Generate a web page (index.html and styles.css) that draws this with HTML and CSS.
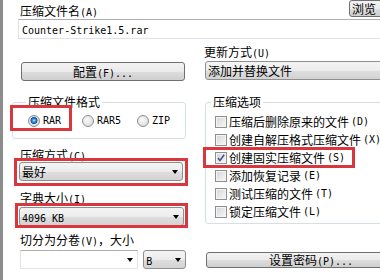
FILE: index.html
```html
<!DOCTYPE html>
<html lang="zh-CN">
<head>
    <meta charset="UTF-8">
    <title>压缩文件名和参数</title>
    <link rel="stylesheet" href="styles.css">
</head>
<body>

    <div class="dialog">
        <div class="name-row">
            <span class="label">压缩文件名<span class="en">(A)</span></span>
            <button class="btn btn-browse">浏览</button>
        </div>
        <div class="name-input"><span class="en">Counter-Strike1.5.rar</span></div>

        <div class="cols">
            <div class="col-left">
                <button class="btn btn-profile">配置<span class="en">(F)...</span></button>

                <div class="group group-format">
                    <div class="group-title">压缩文件格式</div>
                    <div class="radios">
                        <div class="radio"><span class="radio-dot on"></span><span class="en">RAR</span></div>
                        <div class="radio"><span class="radio-dot"></span><span class="en">RAR5</span></div>
                        <div class="radio"><span class="radio-dot"></span><span class="en">ZIP</span></div>
                    </div>
                </div>

                <div class="label lbl-method">压缩方式<span class="en">(C)</span></div>
                <div class="combo combo-method">最好</div>

                <div class="label lbl-dict">字典大小<span class="en">(I)</span></div>
                <div class="combo combo-dict"><span class="en">4096 KB</span></div>

                <div class="label lbl-split">切分为分卷<span class="en">(V)</span>，大小</div>
                <div class="split-row">
                    <div class="combo combo-edit"></div>
                    <div class="combo combo-unit"><span class="en">B</span></div>
                </div>
            </div>

            <div class="col-right">
                <div class="label lbl-update">更新方式<span class="en">(U)</span></div>
                <div class="combo combo-update">添加并替换文件</div>

                <div class="group group-options">
                    <div class="group-title">压缩选项</div>
                    <div class="checks">
                        <div class="check"><span class="box"></span>压缩后删除原来的文件<span class="en">(D)</span></div>
                        <div class="check"><span class="box"></span>创建自解压格式压缩文件<span class="en">(X)</span></div>
                        <div class="check"><span class="box"><svg width="10" height="10" viewBox="0 0 10 10"><path d="M2 5 L4 7.5 L8.2 1.8" fill="none" stroke="#41569a" stroke-width="1.6"/></svg></span>创建固实压缩文件<span class="en">(S)</span></div>
                        <div class="check"><span class="box"></span>添加恢复记录<span class="en">(E)</span></div>
                        <div class="check"><span class="box"></span>测试压缩的文件<span class="en">(T)</span></div>
                        <div class="check"><span class="box"></span>锁定压缩文件<span class="en">(L)</span></div>
                    </div>
                </div>

                <button class="btn btn-password">设置密码<span class="en">(P)...</span></button>
            </div>
        </div>

        <!-- red annotation frames -->
        <div class="mark mark-rar"></div>
        <div class="mark mark-method"></div>
        <div class="mark mark-dict"></div>
        <div class="mark mark-solid"></div>
    </div>

</body>
</html>
```

FILE: styles.css
```css
body {
    margin: 0;
    background: #fff;
    font-family: "Noto Sans CJK SC", sans-serif;
    font-size: 12px;
    color: #000;
}

.dialog {
    position: relative;
    width: 380px;
    height: 280px;
    box-sizing: border-box;
    border-left: 3px solid #8c8c8c;
    padding-left: 17px;
    overflow: hidden;
}

.en {
    font-family: "DejaVu Sans Mono", monospace;
    font-size: 10px;
}

.label {
    display: block;
    height: 12px;
    line-height: 12px;
    white-space: nowrap;
}

/* top row: file name */
.name-row {
    display: flex;
    justify-content: space-between;
    height: 19px;
}

.name-row .label {
    margin-top: 5px;
}

.btn {
    display: block;
    box-sizing: border-box;
    padding: 0;
    border: 1px solid #707070;
    border-radius: 3px;
    background: linear-gradient(#f2f2f2 0%, #ebebeb 50%, #dddddd 51%, #cfcfcf 100%);
    font: inherit;
    color: #000;
    white-space: nowrap;
}

.btn-browse {
    width: 40px;
    height: 17px;
    margin-right: -9px;
    padding-left: 2px;
    text-align: left;
    line-height: 15px;
}

.name-input {
    height: 20px;
    box-sizing: border-box;
    margin-left: -2px;
    margin-right: -30px;
    padding-left: 3px;
    border: 1px solid #e2e3ea;
    border-top-color: #abadb3;
    line-height: 18px;
    background: #fff;
}

.cols {
    display: grid;
    grid-template-columns: 166px 1fr;
    column-gap: 18px;
}

/* left column */
.btn-profile {
    margin-top: 23px;
    margin-left: 1px;
    width: 164px;
    height: 19px;
    line-height: 17px;
}

.group {
    box-sizing: border-box;
    border: 1px solid #d5dfe5;
    border-radius: 3px;
}

.group-title {
    width: max-content;
    margin-top: -7px;
    padding: 0 2px;
    background: #fff;
    line-height: 12px;
}

.group-format {
    margin-top: 21px;
    margin-left: -8px;
    width: 174px;
    height: 37px;
    padding-left: 15px;
}

.group-format .group-title {
    margin-left: -2px;
}

.radios {
    display: grid;
    grid-template-columns: 54px 55px auto;
    margin-top: 7px;
    height: 12px;
}

.radio {
    display: flex;
    align-items: center;
    gap: 3px;
    height: 12px;
    line-height: 12px;
}

.radio-dot {
    width: 12px;
    height: 12px;
    box-sizing: border-box;
    border: 1px solid #8e8f8f;
    border-radius: 50%;
    background: radial-gradient(circle at 40% 40%, #fafafa, #d4d4d4);
}

.radio-dot.on {
    background: radial-gradient(circle at 50% 45%, #b8e4ff 0, #3f93d8 1.6px, #174a9c 3.2px, #e8e8e8 3.8px, #cfcfcf 100%);
}

.combo {
    position: relative;
    box-sizing: border-box;
    height: 19px;
    padding-left: 2px;
    border: 1px solid #8e8f8f;
    border-radius: 3px;
    background: linear-gradient(#f4f4f4 0%, #ececec 50%, #dedede 51%, #d3d3d3 100%);
    line-height: 17px;
    white-space: nowrap;
}

.combo::after {
    content: "";
    position: absolute;
    right: 4px;
    top: 7px;
    border-left: 3.5px solid transparent;
    border-right: 3.5px solid transparent;
    border-top: 4px solid #000;
}

.lbl-method {
    margin-top: 10px;
}

.combo-method {
    margin-top: 1px;
    margin-left: -1px;
    width: 164px;
}

.lbl-dict {
    margin-top: 11px;
}

.combo-dict {
    margin-top: 3px;
    margin-left: -1px;
    width: 165px;
}

.lbl-split {
    margin-top: 8px;
}

.split-row {
    display: flex;
    gap: 5px;
    margin-top: 4px;
}

.combo-edit {
    width: 119px;
    border-color: #e2e3ea;
    border-top-color: #abadb3;
    border-radius: 0;
    background: #fff;
}

.combo-unit {
    width: 43px;
}

/* right column */
.lbl-update {
    margin-top: 7px;
}

.combo-update {
    margin-top: 3px;
    margin-left: 1px;
    margin-right: -30px;
}

.group-options {
    margin-top: 22px;
    margin-left: 1px;
    margin-right: -30px;
    height: 122px;
    padding-left: 9px;
}

.group-options .group-title {
    margin-left: -4px;
}

.checks {
    margin-top: 5px;
}

.check {
    display: flex;
    align-items: center;
    gap: 2px;
    height: 18px;
    line-height: 12px;
    white-space: nowrap;
}

.box {
    display: flex;
    align-items: center;
    justify-content: center;
    width: 12px;
    height: 12px;
    box-sizing: border-box;
    border: 1px solid #8e8f8f;
    background: linear-gradient(135deg, #d2d5da, #f7f7f7);
    box-shadow: inset 0 0 0 1px #f4f4f4;
}

.btn-password {
    margin-top: 28px;
    margin-left: 2px;
    width: 210px;
    height: 16px;
    line-height: 14px;
    text-align: center;
}

/* red annotation frames */
.mark {
    position: absolute;
    box-sizing: border-box;
    border: 3px solid #d9363e;
}

.mark-rar {
    left: 7px;
    top: 105px;
    width: 62px;
    height: 26px;
}

.mark-method {
    left: 11px;
    top: 158px;
    width: 174px;
    height: 28px;
}

.mark-dict {
    left: 12px;
    top: 203px;
    width: 173px;
    height: 25px;
}

.mark-solid {
    left: 200px;
    top: 147px;
    width: 152px;
    height: 21px;
}
```
